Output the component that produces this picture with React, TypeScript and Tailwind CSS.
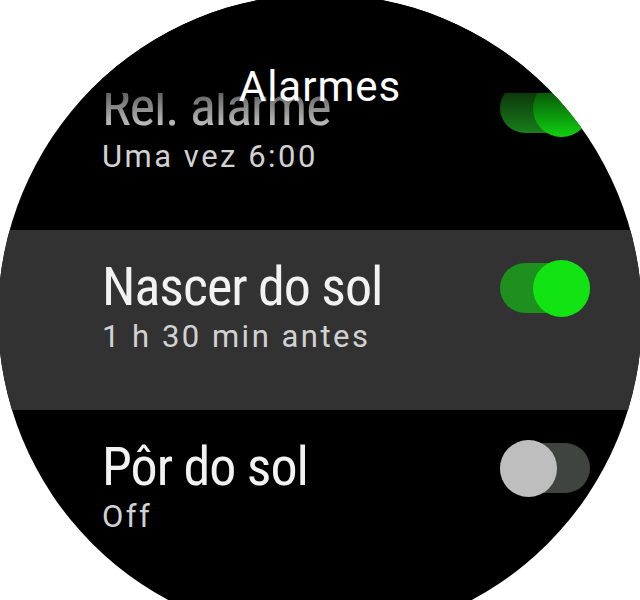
import React from 'react';

type Alarm = {
  title: string;
  detail: string;
  on: boolean;
  selected?: boolean;
};

const alarms: Alarm[] = [
  { title: 'Rel. alarme', detail: 'Uma vez 6:00', on: true },
  { title: 'Nascer do sol', detail: '1 h 30 min antes', on: true, selected: true },
  { title: 'Pôr do sol', detail: 'Off', on: false },
];

function Toggle({ on }: { on: boolean }) {
  return (
    <div className="relative mt-[30px] h-[57px] w-[90px] shrink-0">
      <div
        className={
          on
            ? 'absolute left-0 right-0 top-[3px] h-[50px] rounded-full bg-[#1d901d]'
            : 'absolute left-0 right-0 top-[3px] h-[50px] rounded-full bg-[#404440]'
        }
      />
      <div
        className={
          on
            ? 'absolute right-0 top-0 h-[57px] w-[57px] rounded-full bg-[#12e312]'
            : 'absolute left-0 top-0 h-[57px] w-[57px] rounded-full bg-[#bebebe]'
        }
      />
    </div>
  );
}

function AlarmRow({ alarm }: { alarm: Alarm }) {
  return (
    <div
      className={
        alarm.selected
          ? 'flex h-[180px] items-start justify-between bg-[#323232] pl-[104px] pr-[52px]'
          : 'flex h-[180px] items-start justify-between pl-[104px] pr-[52px]'
      }
    >
      <div className="flex flex-col pt-[27px]">
        <span className="font-['Roboto_Condensed',Roboto,sans-serif] text-[54px] leading-[60px] tracking-[-1px] text-[#f2f2f2]">
          {alarm.title}
        </span>
        <span className="font-['Roboto',sans-serif] text-[31px] leading-[40px] tracking-[2.5px] text-[#d2d2d2]">
          {alarm.detail}
        </span>
      </div>
      <Toggle on={alarm.on} />
    </div>
  );
}

export default function App() {
  return (
    <div className="h-[600px] w-[640px] overflow-hidden bg-white">
      <div className="relative -ml-[2px] -mt-[6px] h-[644px] w-[644px] overflow-hidden rounded-full bg-black">
        <div className="flex flex-col pt-[56px]">
          {alarms.map((a) => (
            <AlarmRow key={a.title} alarm={a} />
          ))}
        </div>

        <div className="absolute left-0 right-0 top-0 flex h-[150px] justify-center bg-[linear-gradient(to_bottom,#000_0px,#000_99px,rgba(0,0,0,0.6)_99px,rgba(0,0,0,0)_150px)]">
          <span className="mt-[72px] h-[42px] font-['Roboto',sans-serif] text-[42px] leading-[42px] tracking-[1px] text-white">
            Alarmes
          </span>
        </div>
      </div>
    </div>
  );
}
